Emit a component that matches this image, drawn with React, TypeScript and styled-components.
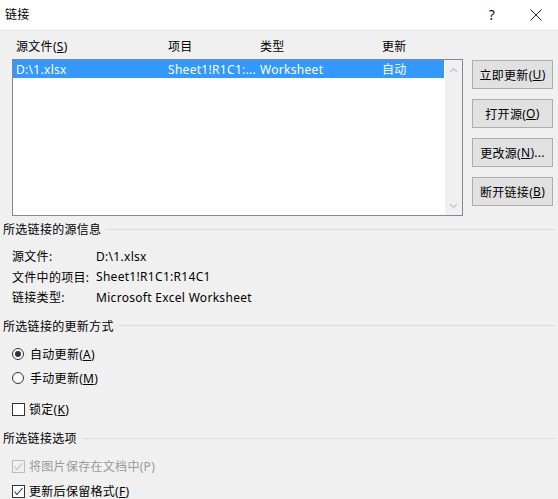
import React from "react";
import styled, { createGlobalStyle } from "styled-components";

const Global = createGlobalStyle`
  html, body { margin: 0; padding: 0; background: #f0f0f0; }
  * { box-sizing: border-box; }
`;

const Dialog = styled.div`
  width: 558px;
  height: 499px;
  overflow: hidden;
  background: #f0f0f0;
  font-family: "Noto Sans", "Noto Sans CJK SC", sans-serif;
  font-size: 12px;
  letter-spacing: 0.3px;
  color: #000;
  display: flex;
  flex-direction: column;
`;

const TitleBar = styled.div`
  height: 29px;
  flex: none;
  background: #fff;
  display: flex;
  align-items: center;
  padding-left: 5px;
`;

const Title = styled.div`
  flex: 1;
  line-height: 16px;
`;

const TitleButton = styled.div`
  width: 44px;
  height: 29px;
  display: flex;
  align-items: center;
  justify-content: center;
  font-size: 14px;
  color: #111;
`;

const Body = styled.div`
  flex: 1;
  padding: 0 3px 0 3px;
  display: flex;
  flex-direction: column;
`;

const TopArea = styled.div`
  display: flex;
  gap: 9px;
  padding-left: 9px;
  padding-right: 2px;
`;

const LeftPane = styled.div`
  width: 451px;
  display: flex;
  flex-direction: column;
`;

const Columns = styled.div`
  display: grid;
  grid-template-columns: 152px 92px 122px 1fr;
  white-space: nowrap;
`;

const HeaderRow = styled(Columns)`
  height: 30px;
  padding-top: 10px;
  padding-left: 4px;
  line-height: 16px;
`;

const ListBox = styled.div`
  height: 157px;
  border: 1px solid #828790;
  background: #fff;
  display: flex;
`;

const Rows = styled.div`
  flex: 1;
  padding-right: 1px;
`;

const Row = styled(Columns)<{ $selected?: boolean }>`
  height: 18px;
  line-height: 19px;
  padding-left: 3px;
  background: ${(p) => (p.$selected ? "#3399ff" : "transparent")};
  color: ${(p) => (p.$selected ? "#fff" : "#000")};
`;

const ScrollBar = styled.div`
  width: 17px;
  background: #f0f0f0;
  display: flex;
  flex-direction: column;
  justify-content: space-between;
  align-items: center;
  padding: 7px 0 6px;
`;

const ButtonColumn = styled.div`
  width: 81px;
  padding-top: 31px;
  display: flex;
  flex-direction: column;
  gap: 10px;
`;

const Button = styled.div`
  height: 29px;
  background: #e1e1e1;
  border: 1px solid #adadad;
  display: flex;
  align-items: center;
  justify-content: center;
  white-space: nowrap;
`;

const SectionHeader = styled.div<{ $mt: number }>`
  margin-top: ${(p) => p.$mt}px;
  height: 20px;
  display: flex;
  align-items: center;
  gap: 5px;
  white-space: nowrap;
`;

const Rule = styled.div`
  flex: 1;
  height: 1px;
  background: #dcdcdc;
`;

const InfoGrid = styled.div`
  margin-top: 7px;
  padding-left: 9px;
  display: grid;
  grid-template-columns: 84px 1fr;
  grid-auto-rows: 20.5px;
  align-items: center;
  white-space: nowrap;
`;

const OptionRow = styled.label<{ $mt: number; $gap: number; $disabled?: boolean }>`
  margin-top: ${(p) => p.$mt}px;
  height: 20px;
  padding-left: 9px;
  display: flex;
  align-items: center;
  gap: ${(p) => p.$gap}px;
  color: ${(p) => (p.$disabled ? "#9a9a9a" : "#000")};
  white-space: nowrap;
`;

const RadioCircle = styled.span<{ $checked?: boolean }>`
  width: 12px;
  height: 12px;
  border-radius: 50%;
  border: 1px solid #333;
  background: #fff;
  display: flex;
  align-items: center;
  justify-content: center;
  &::after {
    content: "";
    width: 6px;
    height: 6px;
    border-radius: 50%;
    background: ${(p) => (p.$checked ? "#333" : "transparent")};
  }
`;

const CheckBox = styled.span<{ $disabled?: boolean }>`
  width: 13px;
  height: 13px;
  border: 1px solid ${(p) => (p.$disabled ? "#bcbcbc" : "#333")};
  background: ${(p) => (p.$disabled ? "#f0f0f0" : "#fff")};
  display: flex;
  align-items: center;
  justify-content: center;
`;

const Chevron = ({ up }: { up?: boolean }) => (
  <svg width="9" height="6" viewBox="0 0 9 6">
    <polyline
      points={up ? "1,5 4.5,1.5 8,5" : "1,1 4.5,4.5 8,1"}
      fill="none"
      stroke="#c2c2c2"
      strokeWidth="1.2"
    />
  </svg>
);

const Check = ({ color }: { color: string }) => (
  <svg width="11" height="11" viewBox="0 0 11 11">
    <polyline points="1.5,5.5 4,8.5 9.5,2" fill="none" stroke={color} strokeWidth="1.1" />
  </svg>
);

export default function App() {
  return (
    <Dialog>
      <Global />
      <TitleBar>
        <Title>链接</Title>
        <TitleButton>?</TitleButton>
        <TitleButton>
          <svg width="12" height="12" viewBox="0 0 12 12">
            <path d="M0.5 0.5 L11.5 11.5 M11.5 0.5 L0.5 11.5" stroke="#222" strokeWidth="1" />
          </svg>
        </TitleButton>
      </TitleBar>
      <Body>
        <TopArea>
          <LeftPane>
            <HeaderRow>
              <span>源文件(<u>S</u>)</span>
              <span>项目</span>
              <span>类型</span>
              <span>更新</span>
            </HeaderRow>
            <ListBox>
              <Rows>
                <Row $selected>
                  <span>D:\1.xlsx</span>
                  <span>Sheet1!R1C1:...</span>
                  <span>Worksheet</span>
                  <span>自动</span>
                </Row>
              </Rows>
              <ScrollBar>
                <Chevron up />
                <Chevron />
              </ScrollBar>
            </ListBox>
          </LeftPane>
          <ButtonColumn>
            <Button>立即更新(<u>U</u>)</Button>
            <Button>打开源(<u>O</u>)</Button>
            <Button>更改源(<u>N</u>)...</Button>
            <Button>断开链接(<u>B</u>)</Button>
          </ButtonColumn>
        </TopArea>

        <SectionHeader $mt={3}>
          所选链接的源信息
          <Rule />
        </SectionHeader>
        <InfoGrid>
          <span>源文件:</span>
          <span>D:\1.xlsx</span>
          <span>文件中的项目:</span>
          <span>Sheet1!R1C1:R14C1</span>
          <span>链接类型:</span>
          <span>Microsoft Excel Worksheet</span>
        </InfoGrid>

        <SectionHeader $mt={8}>
          所选链接的更新方式
          <Rule />
        </SectionHeader>
        <OptionRow $mt={8} $gap={6}>
          <RadioCircle $checked />
          <span>自动更新(<u>A</u>)</span>
        </OptionRow>
        <OptionRow $mt={4.5} $gap={6}>
          <RadioCircle />
          <span>手动更新(<u>M</u>)</span>
        </OptionRow>
        <OptionRow $mt={11} $gap={4}>
          <CheckBox />
          <span>锁定(<u>K</u>)</span>
        </OptionRow>

        <SectionHeader $mt={9}>
          所选链接选项
          <Rule />
        </SectionHeader>
        <OptionRow $mt={8} $gap={4} $disabled>
          <CheckBox $disabled>
            <Check color="#bcbcbc" />
          </CheckBox>
          <span>将图片保存在文档中(P)</span>
        </OptionRow>
        <OptionRow $mt={5} $gap={4}>
          <CheckBox>
            <Check color="#333" />
          </CheckBox>
          <span>更新后保留格式(<u>F</u>)</span>
        </OptionRow>
      </Body>
    </Dialog>
  );
}
